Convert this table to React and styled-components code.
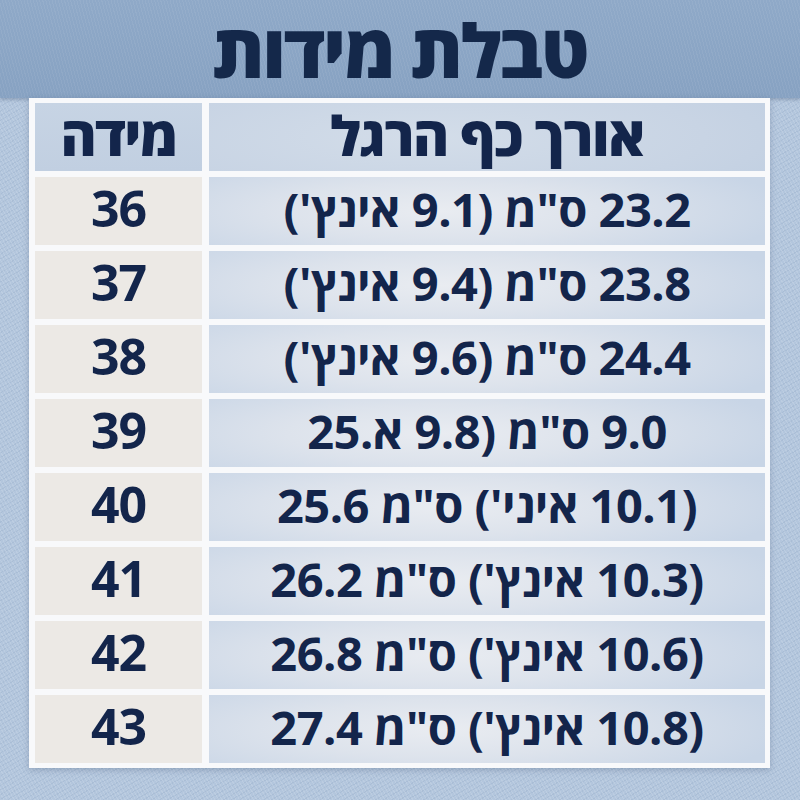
import React from "react";
import styled, { createGlobalStyle } from "styled-components";

const Global = createGlobalStyle`
  html, body { margin: 0; padding: 0; }
  body { font-family: "Open Sans", "DejaVu Sans", sans-serif; }
`;

const Page = styled.div`
  width: 800px;
  height: 800px;
  direction: rtl;
  display: flex;
  flex-direction: column;
  background-color: #b3c6dd;
  background-image:
    repeating-linear-gradient(60deg, rgba(255,255,255,0.12) 0 1px, transparent 1px 3px),
    repeating-linear-gradient(-30deg, rgba(60,90,130,0.08) 0 1px, transparent 1px 4px);
  overflow: hidden;
`;

const TitleBar = styled.header`
  height: 98px;
  flex: none;
  display: flex;
  align-items: center;
  justify-content: center;
  background-color: #8ba6c5;
  background-image:
    repeating-linear-gradient(75deg, rgba(255,255,255,0.06) 0 1px, transparent 1px 3px),
    linear-gradient(180deg, #8fa9c8 0%, #87a2c2 100%);
  box-shadow: 0 2px 3px rgba(40, 60, 90, 0.25);
`;

const Title = styled.h1`
  margin: 0;
  font-family: "Open Sans", "DejaVu Sans", sans-serif;
  font-weight: 800;
  font-size: 74px;
  line-height: 1.2;
  letter-spacing: -2px;
  color: #14284a;
  padding: 2px 8px 0;
`;

const Frame = styled.div`
  margin: 0 30px 0 29px;
  padding: 5px;
  background: #f8f9fb;
  display: grid;
  grid-template-columns: 556px 167px;
  grid-auto-rows: 68px;
  column-gap: 7px;
  row-gap: 6px;
  box-shadow: 0 2px 6px rgba(40, 60, 90, 0.25);
`;

const Cell = styled.div`
  display: flex;
  align-items: center;
  justify-content: center;
  color: #13254b;
  font-family: "Open Sans", "DejaVu Sans", sans-serif;
  font-weight: 700;
  white-space: nowrap;
  background: ${(p) =>
    p.$kind === "headSize"
      ? "linear-gradient(180deg, #c7d4e4 0%, #c1cfe1 100%)"
      : p.$kind === "headLen"
      ? "radial-gradient(ellipse 70% 120% at 40% 50%, #d3dde9 0%, #c8d4e4 70%, #c2d0e2 100%)"
      : p.$kind === "size"
      ? "#ece9e5"
      : "radial-gradient(ellipse 62% 95% at 42% 50%, #e9ecf1 0%, #dde3ec 45%, #c8d5e6 100%)"};
`;

const HeadText = styled.span`
  font-size: 55px;
  font-weight: 800;
  line-height: 1.15;
  letter-spacing: -1.5px;
  padding-bottom: 4px;
`;

const SizeText = styled.span`
  font-size: 50px;
  line-height: 1.15;
  letter-spacing: -1px;
  padding-bottom: 4px;
`;

const LenText = styled.span`
  font-size: 47px;
  line-height: 1.15;
  letter-spacing: -0.5px;
  direction: rtl;
  unicode-bidi: isolate;
  padding-bottom: 4px;
`;

const rows = [
  ["36", "23.2 ס\"מ (9.1 אינץ')"],
  ["37", "23.8 ס\"מ (9.4 אינץ')"],
  ["38", "24.4 ס\"מ (9.6 אינץ')"],
  ["39", "9.0 ס\"מ (9.8 א.25"],
  ["40", "(10.1 איני') ס\"מ 25.6"],
  ["41", "(10.3 אינץ') ס\"מ 26.2"],
  ["42", "(10.6 אינץ') ס\"מ 26.8"],
  ["43", "(10.8 אינץ') ס\"מ 27.4"],
];

export default function App() {
  return (
    <>
      <Global />
      <Page dir="rtl">
        <TitleBar>
          <Title>טבלת מידות</Title>
        </TitleBar>
        <Frame>
          <Cell $kind="headLen">
            <HeadText>אורך כף הרגל</HeadText>
          </Cell>
          <Cell $kind="headSize">
            <HeadText>מידה</HeadText>
          </Cell>
          {rows.map(([size, len]) => (
            <React.Fragment key={size}>
              <Cell $kind="len">
                <LenText>{len}</LenText>
              </Cell>
              <Cell $kind="size">
                <SizeText>{size}</SizeText>
              </Cell>
            </React.Fragment>
          ))}
        </Frame>
      </Page>
    </>
  );
}
